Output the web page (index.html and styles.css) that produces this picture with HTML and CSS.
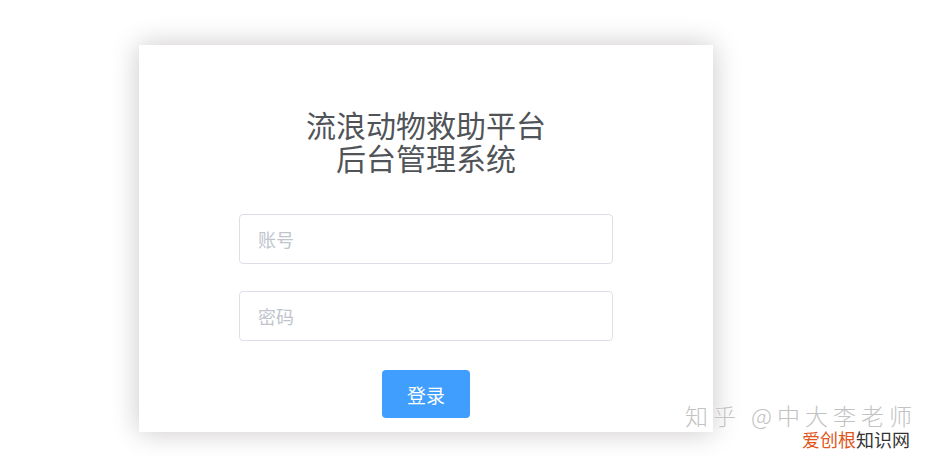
FILE: index.html
```html
<!DOCTYPE html>
<html lang="zh-CN">
<head>
<meta charset="utf-8">
<title>流浪动物救助平台 后台管理系统</title>
<link rel="stylesheet" href="styles.css">
</head>
<body>
<div class="page">
  <form class="login-card">
    <h1 class="title">流浪动物救助平台<br>后台管理系统</h1>
    <div class="field"><input class="input" type="text" placeholder="账号"></div>
    <div class="field"><input class="input" type="password" placeholder="密码"></div>
    <div class="actions"><button class="btn" type="button">登录</button></div>
  </form>
  <div class="watermark">
    <div class="wm-line1">知乎 @中大李老师</div>
    <div class="wm-line2"><span class="wm-orange">爱创根</span><span class="wm-dark">知识网</span></div>
  </div>
</div>
</body>
</html>
```
FILE: styles.css
```css
html, body {
  margin: 0;
  padding: 0;
  background: #fff;
  font-family: "Noto Sans CJK SC", "Noto Sans", sans-serif;
}
.page {
  position: relative;
  width: 936px;
  height: 456px;
  overflow: hidden;
  padding-top: 45px;
  box-sizing: border-box;
}
.login-card {
  margin: 0 0 0 139px;
  width: 574px;
  height: 387px;
  box-sizing: border-box;
  padding: 63px 100px 0;
  background: #fff;
  box-shadow: 0 0 26px #cac6c6;
  display: flex;
  flex-direction: column;
}
.title {
  margin: 0 0 40px;
  font-size: 30px;
  font-weight: 400;
  line-height: 33px;
  color: #505458;
  text-align: center;
}
.field {
  margin-bottom: 27px;
}
.input {
  display: block;
  width: 100%;
  height: 50px;
  box-sizing: border-box;
  border: 1px solid #dcdfe6;
  border-radius: 4px;
  padding: 0 18px;
  font-family: inherit;
  font-size: 18px;
  color: #606266;
  outline: none;
  background: #fff;
}
.input::placeholder {
  color: #c0c4cc;
}
.actions {
  display: flex;
  justify-content: center;
  margin-top: 2px;
}
.btn {
  width: 88px;
  height: 48px;
  border: none;
  border-radius: 4px;
  background: #409eff;
  color: #fff;
  font-family: inherit;
  font-size: 19px;
  padding: 0;
}
.watermark {
  position: absolute;
  right: 24px;
  bottom: 6px;
  text-align: right;
}
.wm-line1 {
  font-size: 23px;
  font-weight: 300;
  line-height: 24px;
  color: #c2c2c2;
  text-shadow: 0 0 2px #fff, 0 0 1px #fff;
  letter-spacing: 5px;
  margin-right: -5px;
}
.wm-line2 {
  font-size: 18px;
  line-height: 22px;
  margin-top: 1px;
  margin-right: 2px;
  text-shadow: 0 0 2px #fff;
}
.wm-orange {
  color: #e0561e;
}
.wm-dark {
  color: #333;
}
```
